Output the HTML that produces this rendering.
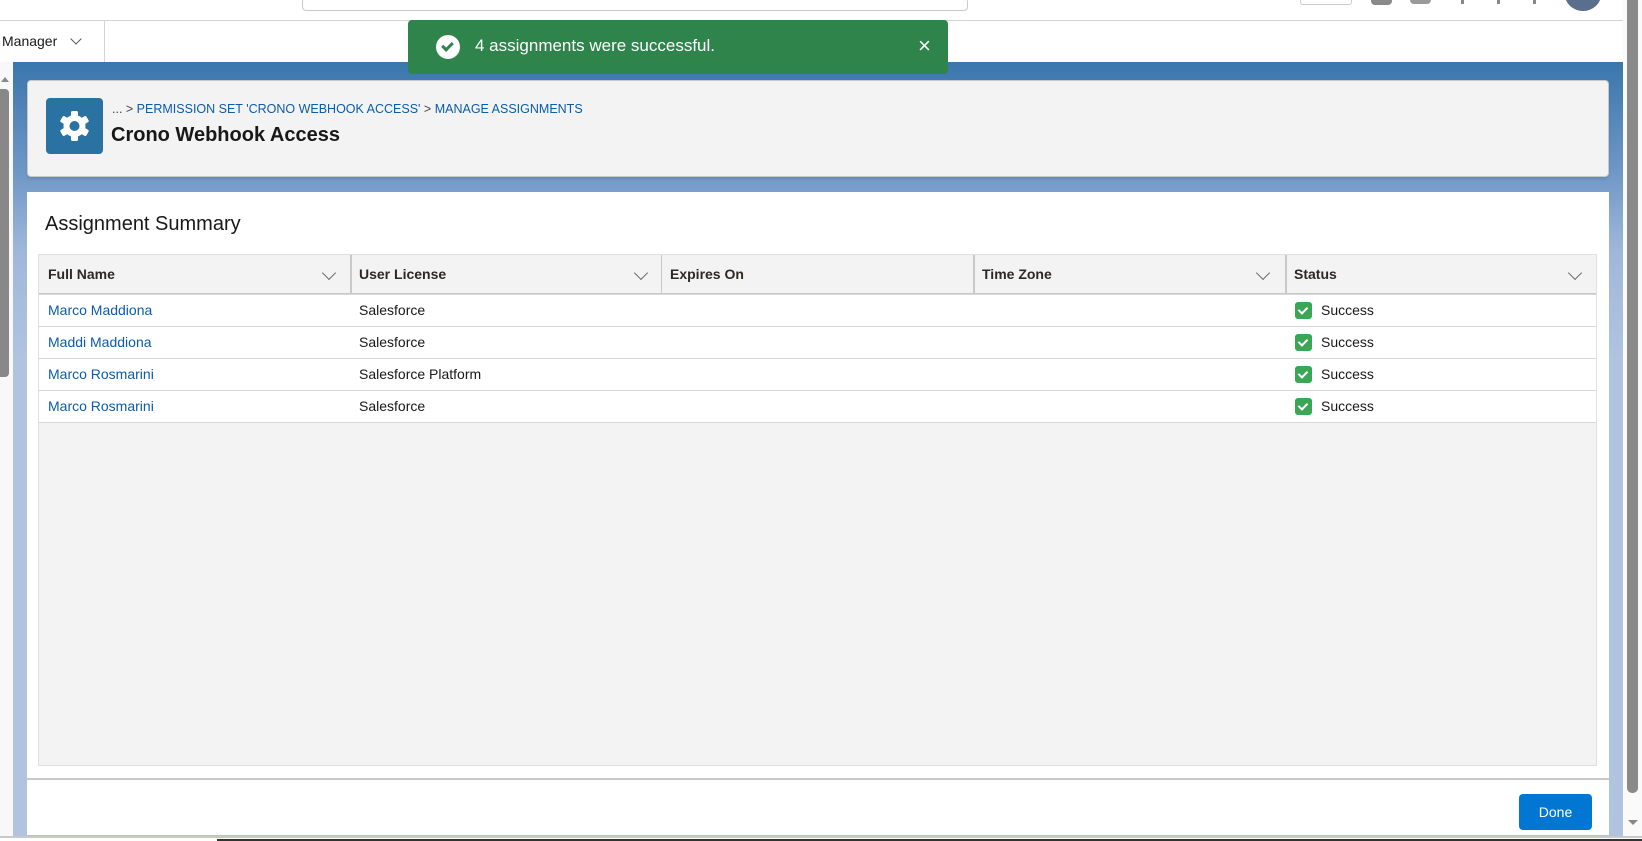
<!DOCTYPE html>
<html><head><meta charset="utf-8"><style>
*{box-sizing:border-box;margin:0;padding:0}
body{width:1642px;height:841px;overflow:hidden;background:#fff;font-family:"Liberation Sans",Arial,sans-serif;position:relative;color:#181818}
.abs{position:absolute}
.bg{left:13px;top:62px;width:1610px;height:774px;background:linear-gradient(#3a76ad 0px,#6f97c6 110px,#9fb8da 190px,#b0c4e0 300px,#b0c4e0 100%)}
.hdr{left:27px;top:80px;width:1582px;height:97px;background:#f3f3f3;border:1px solid #c9c9c9;border-radius:4px;box-shadow:0 2px 2px rgba(0,0,0,.1)}
.panel{left:27px;top:192px;width:1582px;height:643px;background:#fff}
.tbl{left:38px;top:254px;width:1559px;height:512px;background:#f3f3f3;border:1px solid #e0e0e0}
.th{position:absolute;top:0;height:39px;font-weight:bold;font-size:14px;line-height:39px;padding-left:9px;color:#2b2826}
.row{position:absolute;left:0;width:1557px;height:32px;background:#fff;border-top:1px solid #d8d8d8;font-size:14px;line-height:31px}
.row span{position:absolute}
a{color:#0b5cab;text-decoration:none}
.chev{position:absolute;top:13px;width:10px;height:10px;border-right:1px solid #706e6b;border-bottom:1px solid #706e6b;transform:rotate(45deg)}
.ok{display:inline-block;width:17px;height:17px;background:#3ba755;border-radius:3px;vertical-align:middle;position:relative;top:-1px;margin-right:9px}
.ok:after{content:"";position:absolute;left:5px;top:3px;width:4px;height:7px;border-right:2px solid #fff;border-bottom:2px solid #fff;transform:rotate(45deg)}
</style></head><body>
<div class="abs" style="left:302px;top:-2px;width:666px;height:13px;border:1px solid #c9c9c9;border-radius:4px;border-top:none"></div>
<div class="abs" style="left:0;top:20px;width:1623px;height:1px;background:#d4d4d4"></div>
<div class="abs" style="left:1300px;top:0;width:52px;height:5px;border:1px solid #ccc;border-top:none;border-radius:0 0 3px 3px"></div>
<div class="abs" style="left:1371px;top:0;width:21px;height:5px;background:#8a8a8a;border-radius:0 0 4px 4px"></div>
<div class="abs" style="left:1410px;top:0;width:21px;height:4px;background:#9a9a9a;border-radius:0 0 10px 10px"></div>
<div class="abs" style="left:1461px;top:0;width:3px;height:4px;background:#888"></div>
<div class="abs" style="left:1497px;top:0;width:3px;height:4px;background:#888"></div>
<div class="abs" style="left:1533px;top:0;width:3px;height:4px;background:#888"></div>
<div class="abs" style="left:1565px;top:-22px;width:36px;height:33px;background:#5a6e8e;border-radius:50%"></div>
<div class="abs" style="left:2px;top:33px;font-size:14px">Manager</div>
<div class="abs" style="left:72px;top:35px;width:8px;height:8px;border-right:1.5px solid #555;border-bottom:1.5px solid #555;transform:rotate(45deg)"></div>
<div class="abs" style="left:104px;top:21px;width:1px;height:41px;background:#d4d4d4"></div>
<div class="abs bg"></div>
<div class="abs" style="left:0;top:62px;width:13px;height:774px;background:#f8f8f8"></div>
<div class="abs" style="left:1px;top:73px;width:0;height:0;border:4px solid transparent;border-bottom:5px solid #888"></div>
<div class="abs" style="left:0;top:89px;width:9px;height:288px;background:#888;border-radius:0 4px 4px 0"></div>
<div class="abs" style="left:1623px;top:0;width:19px;height:836px;background:#fafafa"></div>
<div class="abs" style="left:1627px;top:0;width:11px;height:793px;background:#8a8a8a;border-radius:0 0 5px 5px"></div>
<div class="abs" style="left:1628px;top:820px;width:0;height:0;border:5px solid transparent;border-top:5px solid #888"></div>
<div class="abs hdr">
 <div class="abs" style="left:18px;top:17px;width:57px;height:56px;background:#2a72a2;border-radius:4px">
  <svg width="57" height="56" viewBox="0 0 57 56"><g transform="translate(28.5,28)" fill="#fff"><circle r="11"/><g><rect x="-3.5" y="-15" width="7" height="30" rx="1.5"/><rect x="-3.5" y="-15" width="7" height="30" rx="1.5" transform="rotate(60)"/><rect x="-3.5" y="-15" width="7" height="30" rx="1.5" transform="rotate(120)"/></g><circle r="5" fill="#2a72a2"/></g></svg>
 </div>
 <div class="abs" style="left:84px;top:21px;font-size:12.5px;color:#0b5cab"><span style="color:#444">... &gt;</span> PERMISSION SET 'CRONO WEBHOOK ACCESS' <span style="color:#444">&gt;</span> MANAGE ASSIGNMENTS</div>
 <div class="abs" style="left:83px;top:43px;font-size:20px;font-weight:bold">Crono Webhook Access</div>
</div>
<div class="abs panel">
 <div class="abs" style="left:18px;top:21px;font-size:20px;color:#181818">Assignment Summary</div>
 <div class="abs" style="left:0;top:586px;width:1582px;height:2px;background:#c9c9c9"></div>
 <div class="abs" style="left:1492px;top:602px;width:73px;height:36px;background:#0176d3;border-radius:4px;color:#fff;font-size:14px;line-height:36px;text-align:center">Done</div>
</div>
<div class="abs tbl">
 <div class="abs" style="left:0;top:0;width:1557px;height:39px;background:#f3f3f3;border-bottom:1px solid #c9c9c9"></div>
 <div class="th" style="left:0">Full Name</div><div class="chev" style="left:285px"></div>
 <div class="abs" style="left:311px;top:0;width:2px;height:38px;background:#c9c9c9"></div>
 <div class="th" style="left:311px">User License</div><div class="chev" style="left:597px"></div>
 <div class="abs" style="left:622px;top:0;width:1px;height:38px;background:#c9c9c9"></div>
 <div class="th" style="left:622px">Expires On</div>
 <div class="abs" style="left:934px;top:0;width:2px;height:38px;background:#c9c9c9"></div>
 <div class="th" style="left:934px">Time Zone</div><div class="chev" style="left:1219px"></div>
 <div class="abs" style="left:1246px;top:0;width:2px;height:38px;background:#c9c9c9"></div>
 <div class="th" style="left:1246px">Status</div><div class="chev" style="left:1531px"></div>
 <div class="row" style="top:39px"><span style="left:9px"><a>Marco Maddiona</a></span><span style="left:320px">Salesforce</span><span style="left:1256px"><i class="ok"></i>Success</span></div>
 <div class="row" style="top:71px"><span style="left:9px"><a>Maddi Maddiona</a></span><span style="left:320px">Salesforce</span><span style="left:1256px"><i class="ok"></i>Success</span></div>
 <div class="row" style="top:103px"><span style="left:9px"><a>Marco Rosmarini</a></span><span style="left:320px">Salesforce Platform</span><span style="left:1256px"><i class="ok"></i>Success</span></div>
 <div class="row" style="top:135px;border-bottom:1px solid #d8d8d8;height:33px"><span style="left:9px"><a>Marco Rosmarini</a></span><span style="left:320px">Salesforce</span><span style="left:1256px"><i class="ok"></i>Success</span></div>
</div>
<div class="abs" style="left:408px;top:20px;width:540px;height:54px;background:#2e844a;border-radius:4px">
 <div class="abs" style="left:28px;top:15px;width:24px;height:24px;background:#fff;border-radius:50%"><div class="abs" style="left:8px;top:5px;width:7px;height:11px;border-right:3px solid #2e844a;border-bottom:3px solid #2e844a;transform:rotate(45deg)"></div></div>
 <div class="abs" style="left:67px;top:16px;font-size:17px;color:#fff">4 assignments were successful.</div>
 <div class="abs" style="left:510px;top:13px;font-size:22px;color:#fff">×</div>
</div>
<div class="abs" style="left:0;top:836px;width:1642px;height:2px;background:#c9c9c9"></div>
<div class="abs" style="left:217px;top:839px;width:1425px;height:2px;background:#333"></div>
</body></html>
